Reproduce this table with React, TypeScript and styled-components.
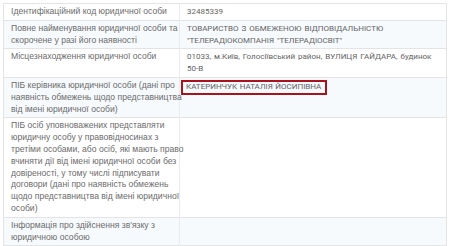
import React from 'react';
import styled, { createGlobalStyle } from 'styled-components';

const GlobalStyle = createGlobalStyle`
  html, body {
    margin: 0;
    padding: 0;
    background: #ffffff;
  }
  body {
    font-family: 'Liberation Sans', Arial, sans-serif;
  }
`;

const Page = styled.div`
  width: 450px;
  height: 246px;
  overflow: hidden;
  padding: 3px 3px 0 3px;
  box-sizing: border-box;
`;

const Table = styled.table`
  width: 444px;
  table-layout: fixed;
  border-collapse: collapse;
  border: 1px solid #e4e4e4;
  line-height: 11.8px;
  color: #6c6c6c;
`;

const Row = styled.tr<{ striped: boolean }>`
  background: ${props => (props.striped ? '#f6fafd' : '#ffffff')};
  border-top: 1px solid #e4e4e4;
`;

const LabelCell = styled.td`
  padding: 2px 2px 2px 7px;
  vertical-align: top;
  border-right: 1px solid #ebebeb;
  font-size: 8.6px;
  white-space: nowrap;
`;

const ValueCell = styled.td`
  padding: 2px 7px 2px 7px;
  vertical-align: top;
  color: #646464;
  font-family: Roboto, 'Liberation Sans', Arial, sans-serif;
  font-size: 8px;
  word-spacing: 1px;
`;

const NoWrap = styled.span`
  white-space: nowrap;
`;

const Highlight = styled.span`
  display: inline-block;
  border: 2px solid #a8131e;
  padding: 0 4px 1px 3px;
  margin-left: -6px;
  line-height: 10px;
  word-spacing: 0.5px;
`;

const rows: { label: string[]; value: React.ReactNode }[] = [
  { label: ['Ідентифікаційний код юридичної особи'], value: '32485339' },
  {
    label: ['Повне найменування юридичної особи та', 'скорочене у разі його наявності'],
    value: 'ТОВАРИСТВО З ОБМЕЖЕНОЮ ВІДПОВІДАЛЬНІСТЮ "ТЕЛЕРАДІОКОМПАНІЯ "ТЕЛЕРАДІОСВІТ"',
  },
  {
    label: ['Місцезнаходження юридичної особи'],
    value: (
      <>
        01033, м.Київ, Голосіївський район, ВУЛИЦЯ ГАЙДАРА, будинок <NoWrap>50-В</NoWrap>
      </>
    ),
  },
  {
    label: [
      'ПІБ керівника юридичної особи (дані про',
      'наявність обмежень щодо представництва',
      'від імені юридичної особи)',
    ],
    value: <Highlight>КАТЕРИНЧУК НАТАЛІЯ ЙОСИПІВНА</Highlight>,
  },
  {
    label: [
      'ПІБ осіб уповноважених представляти',
      'юридичну особу у правовідносинах з',
      'третіми особами, або осіб, які мають право',
      'вчиняти дії від імені юридичної особи без',
      'довіреності, у тому числі підписувати',
      'договори (дані про наявність обмежень',
      'щодо представництва від імені юридичної',
      'особи)',
    ],
    value: '',
  },
  { label: ["Інформація про здійснення зв'язку з", 'юридичною особою'], value: '' },
];

const App: React.FC = () => {
  return (
    <Page>
      <GlobalStyle />
      <Table>
        <colgroup>
          <col style={{ width: 176 }} />
          <col />
        </colgroup>
        <tbody>
          {rows.map((row, i) => (
            <Row key={i} striped={i % 2 === 1}>
              <LabelCell>
                {row.label.map((line, j) => (
                  <React.Fragment key={j}>
                    {j > 0 && <br />}
                    {line}
                  </React.Fragment>
                ))}
              </LabelCell>
              <ValueCell>{row.value}</ValueCell>
            </Row>
          ))}
        </tbody>
      </Table>
    </Page>
  );
};

export default App;
